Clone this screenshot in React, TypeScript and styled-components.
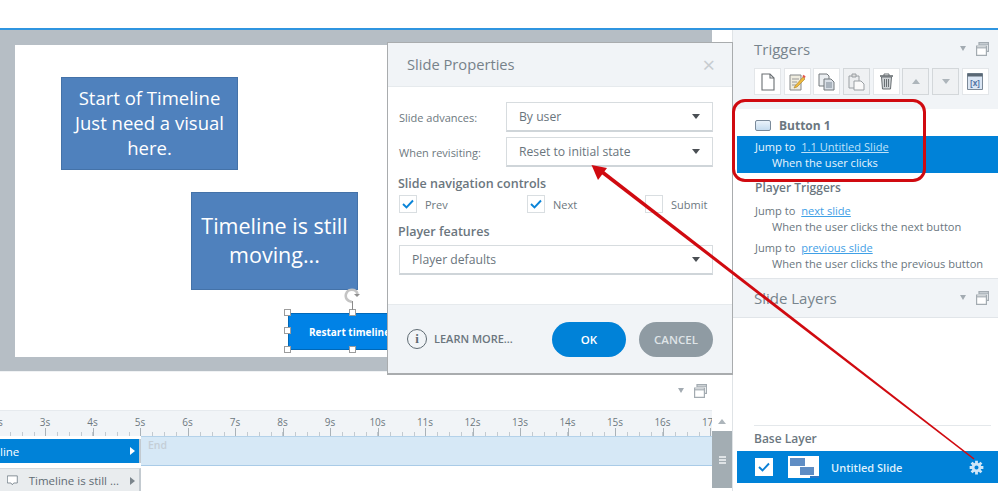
import React from 'react'
import styled, { createGlobalStyle } from 'styled-components'

const GlobalStyle = createGlobalStyle`
  html, body {
    margin: 0;
    padding: 0;
    background: #fff;
  }
  * { box-sizing: border-box; }
  body {
    font-family: "Open Sans", "Liberation Sans", sans-serif;
    color: #5f6b73;
  }
`

const seconds = [2, 3, 4, 5, 6, 7, 8, 9, 10, 11, 12, 13, 14, 15, 16, 17]

const PanelIcon = () => (
  <svg width='13' height='14' viewBox='0 0 13 14' fill='none' stroke='#a3abb1' strokeWidth='1.2'>
    <path d='M3 3V.6h9.400v8.800H10.500' />
    <path d='M3 2.200h9.400' />
    <path d='M.6 4h9.800v9.400H.6z' fill='#fff' />
    <path d='M.6 5.800h9.800' />
  </svg>
)

const Caret = () => <CaretShape />

const CheckMark = ({ color = '#0a84d8' }: { color?: string }) => (
  <svg width='12' height='10' viewBox='0 0 12 10' fill='none' stroke={color} strokeWidth='1.9'>
    <path d='M1 5l3.500 3.500L11 1.500' />
  </svg>
)

const ToolIcon = ({ name }: { name: string }) => {
  switch (name) {
    case 'new':
      return (
        <svg width='14' height='18' viewBox='0 0 14 18' fill='#fff' stroke='#6a6f73' strokeWidth='1.1'>
          <path d='M1 1h8l4 4v12H1z' />
          <path d='M9 1v4h4' fill='none' />
        </svg>
      )
    case 'edit':
      return (
        <svg width='17' height='18' viewBox='0 0 17 18' fill='none'>
          <path d='M1 2h11v15H1z' fill='#efecdf' stroke='#85888a' />
          <path d='M3 6h7M3 9h5M3 12h4' stroke='#999' />
          <path d='M6 13l8-9 2 2-8 8-3 1z' fill='#eeb93c' stroke='#a8802a' strokeWidth='.6' />
          <path d='M14 2.500l2 2' stroke='#e2564c' strokeWidth='2' />
        </svg>
      )
    case 'copy':
      return (
        <svg width='17' height='18' viewBox='0 0 17 18' fill='none' stroke='#73787c'>
          <path d='M1 1h8l2 2v10H1z' fill='#eceff2' />
          <path d='M6 6h7l3 3v8H6z' fill='#d9dfe6' />
          <path d='M8 10h6M8 12h6M8 14h6' stroke='#7b8794' />
        </svg>
      )
    case 'paste':
      return (
        <svg width='17' height='18' viewBox='0 0 17 18' fill='none' stroke='#9a9fa3'>
          <path d='M1 3h10v12H1z' fill='#eceef0' />
          <path d='M4 1h4v3H4z' fill='#ddd' />
          <path d='M6 8h7l3 3v6H6z' fill='#fafafa' />
        </svg>
      )
    case 'trash':
      return (
        <svg width='15' height='17' viewBox='0 0 15 17' fill='none' stroke='#6a7074'>
          <path d='M1 3h13' strokeWidth='1.6' />
          <path d='M5 3V1h5v2' />
          <path d='M2.500 4l1 12h8l1-12z' fill='#cfd3d6' />
          <path d='M5.500 6v8M7.500 6v8M9.500 6v8' />
        </svg>
      )
    case 'up':
      return <UpCaret />
    case 'down':
      return <DownCaret />
    default:
      return (
        <svg width='16' height='17' viewBox='0 0 16 17' fill='none'>
          <path d='M.5.500h15v16H.5z' fill='#dbe6f4' stroke='#7b8998' />
          <path d='M.5.500h15v3H.5z' fill='#5a6875' />
          <text x='8' y='12.500' fontSize='8' fontWeight='700' fill='#5577a8' textAnchor='middle' fontFamily='Open Sans'>
            [x]
          </text>
        </svg>
      )
  }
}

const tools = ['new', 'edit', 'copy', 'paste', 'trash', 'up', 'down', 'var']

const Handles = () => (
  <>
    <Handle $x={-4} $y={-4} />
    <Handle $x={61} $y={-4} />
    <Handle $x={-4} $y={14} />
    <Handle $x={-4} $y={33} />
    <Handle $x={61} $y={33} />
  </>
)

const App = (): JSX.Element => (
  <>
    <GlobalStyle />
    <Page>
      <TopBar />
      <Main>
        <LeftColumn>
          <Stage>
            <Slide>
              <TextBox $left={46} $top={32} $width={177} $height={93} $size={18.500} $line={25}>
                Start of Timeline
                <br />
                Just need a visual
                <br />
                here.
              </TextBox>
              <TextBox $left={176} $top={147} $width={167} $height={98} $size={21.500} $line={29}>
                Timeline is still
                <br />
                moving...
              </TextBox>
              <SelectedButton>
                <span>Restart timeline</span>
              </SelectedButton>
              <HandleLayer>
                <Handles />
                <RotateStem />
                <RotateIcon width='18' height='16' viewBox='0 0 18 16' fill='none'>
                  <path d='M9 14c-5-1-7-4-6-8 1-3 4-5 8-4 2 .5 3 2 3.500 4' stroke='#c4c4c4' strokeWidth='2.600' />
                  <path d='M11 6h6l-3 3z' fill='#8f8f8f' />
                </RotateIcon>
              </HandleLayer>
            </Slide>
          </Stage>
          <StageFooter>
            <Caret />
            <PanelIcon />
          </StageFooter>
          <Timeline>
            <Ruler>
              <RulerScale>
                {seconds.map((s) => (
                  <RulerCell key={s}>
                    <RulerLabel>{s}s</RulerLabel>
                    <Ticks />
                  </RulerCell>
                ))}
              </RulerScale>
            </Ruler>
            <TimelineRow>
              <RowName $active>
                <span>line</span>
                <RowArrow $active />
              </RowName>
              <RowTrack $active>End</RowTrack>
            </TimelineRow>
            <TimelineRow>
              <RowName>
                <svg width='15' height='15' viewBox='0 0 15 15' fill='#fff' stroke='#5d6b75' strokeWidth='1'>
                  <path d='M.5 1h14v10H9.500L7.500 13.500 5.500 11h-5z' />
                </svg>
                <RowLabel>Timeline is still ...</RowLabel>
                <RowArrow />
              </RowName>
              <RowTrack />
            </TimelineRow>
            <ScrollBar>
              <ScrollButton>
                <UpCaret />
              </ScrollButton>
              <ScrollThumb>
                <Grip />
              </ScrollThumb>
            </ScrollBar>
          </Timeline>
        </LeftColumn>

        <RightPanel>
          <PanelHeader $tall>
            <PanelTitleRow>
              <PanelTitle>Triggers</PanelTitle>
              <PanelActions>
                <Caret />
                <PanelIcon />
              </PanelActions>
            </PanelTitleRow>
            <Toolbar>
              {tools.map((name) => (
                <ToolButton key={name} $dim={name === 'paste' || name === 'up' || name === 'down'}>
                  <ToolIcon name={name} />
                </ToolButton>
              ))}
            </Toolbar>
          </PanelHeader>

          <TriggerList>
            <ObjectRow>
              <ObjectIcon />
              Button 1
            </ObjectRow>
            <TriggerRow $selected>
              <TriggerLine>
                Jump to <TriggerLink $selected>1.1 Untitled Slide</TriggerLink>
              </TriggerLine>
              <TriggerWhen>When the user clicks</TriggerWhen>
            </TriggerRow>
            <GroupTitle>Player Triggers</GroupTitle>
            <TriggerRow>
              <TriggerLine>
                Jump to <TriggerLink>next slide</TriggerLink>
              </TriggerLine>
              <TriggerWhen>When the user clicks the next button</TriggerWhen>
            </TriggerRow>
            <TriggerRow>
              <TriggerLine>
                Jump to <TriggerLink>previous slide</TriggerLink>
              </TriggerLine>
              <TriggerWhen>When the user clicks the previous button</TriggerWhen>
            </TriggerRow>
          </TriggerList>

          <PanelHeader>
            <PanelTitleRow>
              <PanelTitle>Slide Layers</PanelTitle>
              <PanelActions>
                <Caret />
                <PanelIcon />
              </PanelActions>
            </PanelTitleRow>
          </PanelHeader>

          <LayerArea>
            <LayerDivider />
            <BaseLabel>Base Layer</BaseLabel>
            <LayerRow>
              <LayerCheck>
                <CheckMark color='#0a7fd6' />
              </LayerCheck>
              <LayerThumb>
                <ThumbA />
                <ThumbB />
                <ThumbTag />
              </LayerThumb>
              <LayerName>Untitled Slide</LayerName>
              <svg width='15' height='15' viewBox='0 0 24 24' fill='none' stroke='#cfe6f8' strokeWidth='4.500'>
                <circle cx='12' cy='12' r='5.500' />
                <path d='M12 1v4M12 19v4M1 12h4M19 12h4M4.200 4.200l2.900 2.900M16.900 16.900l2.900 2.900M19.800 4.200l-2.900 2.900M7.100 16.900l-2.900 2.900' />
              </svg>
            </LayerRow>
          </LayerArea>
        </RightPanel>
      </Main>

      <Dialog>
        <DialogHeader>
          <DialogTitle>Slide Properties</DialogTitle>
          <CloseMark>×</CloseMark>
        </DialogHeader>
        <DialogBody>
          <FieldRow>
            <FieldLabel>Slide advances:</FieldLabel>
            <SelectBox>
              By user
              <SelectCaret />
            </SelectBox>
          </FieldRow>
          <FieldRow>
            <FieldLabel>When revisiting:</FieldLabel>
            <SelectBox>
              Reset to initial state
              <SelectCaret />
            </SelectBox>
          </FieldRow>
          <SectionTitle $top={8}>Slide navigation controls</SectionTitle>
          <CheckRow>
            <CheckItem $width={128}>
              <CheckBox>
                <CheckMark />
              </CheckBox>
              Prev
            </CheckItem>
            <CheckItem $width={118}>
              <CheckBox>
                <CheckMark />
              </CheckBox>
              Next
            </CheckItem>
            <CheckItem $width={68}>
              <CheckBox />
              Submit
            </CheckItem>
          </CheckRow>
          <SectionTitle $top={3}>Player features</SectionTitle>
          <SelectBox $full>
            Player defaults
            <SelectCaret />
          </SelectBox>
        </DialogBody>
        <DialogFooter>
          <LearnMore>
            <InfoIcon>i</InfoIcon>
            LEARN MORE...
          </LearnMore>
          <FooterButton $primary>OK</FooterButton>
          <FooterButton>CANCEL</FooterButton>
        </DialogFooter>
      </Dialog>

      <Callout />
      <AnnotationLayer width='998' height='491' viewBox='0 0 998 491'>
        <polygon points='974.500,458.400 973.500,459.600 601,173.500 603.300,170.500' fill='#d00a10' />
        <polygon points='591.500,165 607,168 598,180' fill='#d00a10' />
      </AnnotationLayer>
    </Page>
  </>
)

const Page = styled.div`
  position: relative;
  width: 998px;
  height: 491px;
  overflow: hidden;
  background: #fff;
`

const TopBar = styled.div`
  height: 30px;
  border-bottom: 2px solid #2f95e0;
`

const Main = styled.div`
  display: flex;
  height: 461px;
`

const LeftColumn = styled.div`
  width: 733px;
  display: flex;
  flex-direction: column;
  border-right: 1px solid #dfe3e6;
`

const Stage = styled.div`
  height: 341px;
  margin-right: 20px;
  padding: 15px 0 14px 15px;
  background: #b6bec5;
`

const Slide = styled.div`
  position: relative;
  width: 420px;
  height: 312px;
  background: #fff;
`

const TextBox = styled.div<{ $left: number; $top: number; $width: number; $height: number; $size: number; $line: number }>`
  position: absolute;
  left: ${(p) => p.$left}px;
  top: ${(p) => p.$top}px;
  width: ${(p) => p.$width}px;
  height: ${(p) => p.$height}px;
  padding-bottom: 2px;
  display: flex;
  align-items: center;
  justify-content: center;
  text-align: center;
  background: #4f81bd;
  border: 1px solid #4472a8;
  color: #fff;
  font-size: ${(p) => p.$size}px;
  line-height: ${(p) => p.$line}px;
`

const SelectedButton = styled.div`
  position: absolute;
  left: 273px;
  top: 268px;
  width: 110px;
  height: 37px;
  padding-left: 20px;
  display: flex;
  align-items: center;
  background: #0082e6;
  border: 1px solid #0068b8;
  color: #fff;
  font-size: 10px;
  font-weight: 700;
  white-space: nowrap;
`

const HandleLayer = styled.div`
  position: absolute;
  left: 273px;
  top: 268px;
`

const Handle = styled.div<{ $x: number; $y: number }>`
  position: absolute;
  left: ${(p) => p.$x}px;
  top: ${(p) => p.$y}px;
  width: 7px;
  height: 7px;
  background: #fff;
  border: 1.500px solid #9c9c9c;
`

const RotateStem = styled.div`
  position: absolute;
  left: 64px;
  top: -12px;
  width: 1px;
  height: 9px;
  background: #8a8a8a;
`

const RotateIcon = styled.svg`
  position: absolute;
  left: 55px;
  top: -25px;
`

const StageFooter = styled.div`
  height: 39px;
  padding: 12px 25px 0 0;
  display: flex;
  justify-content: flex-end;
  gap: 10px;
  border-top: 1px solid #f0f2f4;
`

const CaretShape = styled.div`
  width: 0;
  height: 0;
  margin-top: 4px;
  border-left: 3.500px solid transparent;
  border-right: 3.500px solid transparent;
  border-top: 5px solid #a3abb2;
`

const Timeline = styled.div`
  position: relative;
  flex: 1;
  overflow: hidden;
`

const Ruler = styled.div`
  height: 26px;
  margin-right: 20px;
  background: #f1f4f7;
  border-top: 1px solid #e6eaee;
  overflow: hidden;
`

const RulerScale = styled.div`
  display: flex;
  margin-left: -2.500px;
`

const RulerCell = styled.div`
  position: relative;
  flex: 0 0 47.500px;
  height: 25px;
`

const RulerLabel = styled.span`
  position: absolute;
  left: 0;
  top: 4px;
  transform: translateX(-50%);
  font-size: 10px;
  line-height: 14px;
  color: #6d7880;
  white-space: nowrap;
`

const Ticks = styled.div`
  position: absolute;
  left: 0;
  right: 0;
  bottom: 0;
  height: 8px;
  background:
    linear-gradient(#aab2b8, #aab2b8) 0 0 / 1px 8px no-repeat,
    repeating-linear-gradient(90deg, #c3cad0 0 1px, transparent 1px 11.875px) 0 4px / 100% 4px no-repeat;
`

const TimelineRow = styled.div`
  display: flex;
  height: 30px;
  margin-right: 20px;
  background: #fff;
`

const RowName = styled.div<{ $active?: boolean }>`
  width: 141px;
  height: 24px;
  margin-top: ${(p) => (p.$active ? '3px' : '2px')};
  padding: 0 4px 0 ${(p) => (p.$active ? '0' : '7px')};
  display: flex;
  align-items: center;
  gap: 11px;
  background: ${(p) => (p.$active ? '#0082d8' : '#e9ecee')};
  border-right: 2px solid #c3cad0;
  border-top: ${(p) => (p.$active ? '0' : '1px solid #d5dadd')};
  color: ${(p) => (p.$active ? '#fff' : '#5f6b73')};
  font-size: 11.500px;
`

const RowLabel = styled.span`
  white-space: nowrap;
`

const RowArrow = styled.i<{ $active?: boolean }>`
  margin-left: auto;
  width: 0;
  height: 0;
  border-top: 4px solid transparent;
  border-bottom: 4px solid transparent;
  border-left: 5px solid ${(p) => (p.$active ? '#fff' : '#7b858c')};
`

const RowTrack = styled.div<{ $active?: boolean }>`
  flex: 1;
  height: 30px;
  padding-left: 7px;
  background: ${(p) => (p.$active ? '#d6e8f6' : '#fff')};
  border-top: ${(p) => (p.$active ? '1px solid #b4d2ea' : '0')};
  border-bottom: ${(p) => (p.$active ? '1px solid #a9cbe7' : '0')};
  color: #c4ced6;
  font-size: 10.500px;
  font-weight: 600;
  line-height: 17px;
`

const ScrollBar = styled.div`
  position: absolute;
  top: 1px;
  right: 0;
  width: 20px;
`

const ScrollButton = styled.div`
  height: 20px;
  display: flex;
  align-items: center;
  justify-content: center;
  background: #fff;
`

const ScrollThumb = styled.div`
  height: 57px;
  display: flex;
  align-items: center;
  justify-content: center;
  background: #a3adb3;
`

const Grip = styled.div`
  width: 7px;
  height: 8px;
  background: repeating-linear-gradient(#dfe3e6 0 2px, transparent 2px 3px);
`

const UpCaret = styled.i`
  width: 0;
  height: 0;
  border-left: 4px solid transparent;
  border-right: 4px solid transparent;
  border-bottom: 5px solid #adb5bb;
`

const DownCaret = styled.i`
  width: 0;
  height: 0;
  border-left: 4px solid transparent;
  border-right: 4px solid transparent;
  border-top: 5px solid #adb5bb;
`

const RightPanel = styled.div`
  flex: 1;
  display: flex;
  flex-direction: column;
`

const PanelHeader = styled.div<{ $tall?: boolean }>`
  height: ${(p) => (p.$tall ? '79px' : '40px')};
  flex: none;
  padding: 8px 0 0 21px;
  background: #f1f4f7;
  border-top: ${(p) => (p.$tall ? '0' : '1px solid #e1e5e9')};
  border-bottom: ${(p) => (p.$tall ? '0' : '1px solid #e1e5e9')};
`

const PanelTitleRow = styled.div`
  display: flex;
  align-items: center;
  justify-content: space-between;
  padding-right: 9px;
  height: 22px;
`

const PanelTitle = styled.div`
  font-size: 15px;
  color: #77848d;
`

const PanelActions = styled.div`
  display: flex;
  align-items: flex-start;
  gap: 10px;
`

const Toolbar = styled.div`
  margin-top: 8px;
  display: flex;
  gap: 2.700px;
`

const ToolButton = styled.div<{ $dim?: boolean }>`
  width: 27px;
  height: 27px;
  display: flex;
  align-items: center;
  justify-content: center;
  background: ${(p) => (p.$dim ? '#eff1f3' : '#fff')};
  border: 1px solid ${(p) => (p.$dim ? '#d3d7da' : '#e3e6e9')};
`

const TriggerList = styled.div`
  height: 169px;
  flex: none;
  padding: 6px 0 0 4px;
`

const ObjectRow = styled.div`
  height: 21px;
  padding-left: 18px;
  display: flex;
  align-items: center;
  gap: 8px;
  font-size: 12px;
  font-weight: 700;
  color: #6b7780;
`

const ObjectIcon = styled.div`
  width: 16px;
  height: 11px;
  border: 1px solid #7a8a9a;
  border-radius: 2px;
  background: linear-gradient(#eaf3fb, #c5dbee);
`

const TriggerRow = styled.div<{ $selected?: boolean }>`
  height: 37px;
  padding: 3px 0 0 18px;
  background: ${(p) => (p.$selected ? '#0082d8' : 'transparent')};
  color: ${(p) => (p.$selected ? '#eaf5fd' : '#6a767e')};
  font-size: 11.100px;
  line-height: 15.500px;
`

const TriggerLine = styled.div``

const TriggerWhen = styled.div`
  padding-left: 17px;
  white-space: nowrap;
`

const TriggerLink = styled.span<{ $selected?: boolean }>`
  margin-left: 3px;
  color: ${(p) => (p.$selected ? '#bfe1f8' : '#3fa0e6')};
  text-decoration: underline;
`

const GroupTitle = styled.div`
  height: 27px;
  padding: 7px 0 0 18px;
  font-size: 12px;
  font-weight: 600;
  line-height: 16px;
  color: #6b7780;
`

const LayerArea = styled.div`
  flex: 1;
  padding: 107px 0 0 4px;
`

const LayerDivider = styled.div`
  height: 1px;
  margin: 0 7px 0 17px;
  background: #e4e8eb;
`

const BaseLabel = styled.div`
  height: 25px;
  padding: 5px 0 0 17px;
  font-size: 12px;
  font-weight: 600;
  line-height: 16px;
  color: #6b7780;
`

const LayerRow = styled.div`
  height: 32px;
  padding: 0 14px 0 18px;
  display: flex;
  align-items: center;
  background: #0082d8;
`

const LayerCheck = styled.div`
  width: 18px;
  height: 18px;
  display: flex;
  align-items: center;
  justify-content: center;
  background: #fff;
`

const LayerThumb = styled.div`
  position: relative;
  width: 31px;
  height: 22px;
  margin-left: 15px;
  background: #fff;
`

const ThumbA = styled.div`
  position: absolute;
  left: 2px;
  top: 2px;
  width: 15px;
  height: 8px;
  background: #5f8dc4;
`

const ThumbB = styled.div`
  position: absolute;
  left: 12px;
  top: 11px;
  width: 14px;
  height: 8px;
  background: #5f8dc4;
`

const ThumbTag = styled.div`
  position: absolute;
  right: 0;
  bottom: 0;
  width: 9px;
  height: 2px;
  background: #2f78c4;
`

const LayerName = styled.div`
  flex: 1;
  margin-left: 12px;
  color: #dff0fb;
  font-size: 11px;
  font-weight: 600;
`

const Dialog = styled.div`
  position: absolute;
  left: 387px;
  top: 42px;
  width: 346px;
  height: 333px;
  display: flex;
  flex-direction: column;
  background: #fff;
  border: 1px solid #a9acae;
  border-bottom-width: 2px;
`

const DialogHeader = styled.div`
  height: 44px;
  padding: 0 12px 2px 19px;
  display: flex;
  align-items: center;
  justify-content: space-between;
  background: #f1f4f7;
  border-bottom: 1px solid #e6eaed;
`

const DialogTitle = styled.div`
  font-size: 14.700px;
  color: #77828a;
`

const CloseMark = styled.div`
  margin-right: 5px;
  font-size: 22px;
  line-height: 22px;
  color: #c7ccd0;
`

const DialogBody = styled.div`
  flex: 1;
  padding: 15px 19px 0 11px;
`

const FieldRow = styled.div`
  height: 30px;
  margin-bottom: 5px;
  display: flex;
  align-items: center;
  justify-content: space-between;
`

const FieldLabel = styled.div`
  font-size: 11px;
  color: #6d7880;
`

const SelectBox = styled.div<{ $full?: boolean }>`
  position: relative;
  width: ${(p) => (p.$full ? '100%' : '207px')};
  height: 30px;
  margin-top: ${(p) => (p.$full ? '4px' : '0')};
  padding-left: 12px;
  display: flex;
  align-items: center;
  background: #fff;
  border: 1px solid #d7dcdf;
  border-bottom: 2px solid #cfd5d9;
  font-size: 12.200px;
  color: #6a757d;
`

const SelectCaret = styled.i`
  position: absolute;
  right: 12px;
  top: 11px;
  width: 0;
  height: 0;
  border-left: 4px solid transparent;
  border-right: 4px solid transparent;
  border-top: 5px solid #4a4f54;
`

const SectionTitle = styled.div<{ $top: number }>`
  height: 18px;
  margin: ${(p) => p.$top}px 0 0 -1px;
  font-size: 12.500px;
  font-weight: 600;
  line-height: 18px;
  color: #6b767e;
`

const CheckRow = styled.div`
  height: 26px;
  margin: -2px 0 6px;
  display: flex;
  align-items: center;
`

const CheckItem = styled.div<{ $width: number }>`
  width: ${(p) => p.$width}px;
  display: flex;
  align-items: center;
  gap: 8px;
  font-size: 11px;
  color: #6d7880;
`

const CheckBox = styled.div`
  width: 18px;
  height: 18px;
  display: flex;
  align-items: center;
  justify-content: center;
  background: #fff;
  border: 1px solid #d9dee1;
`

const DialogFooter = styled.div`
  height: 69px;
  padding: 17px 19px 0 19px;
  display: flex;
  align-items: flex-start;
  gap: 13px;
  background: #f1f4f7;
  border-top: 1px solid #e6eaed;
`

const LearnMore = styled.div`
  flex: 1;
  height: 33px;
  display: flex;
  align-items: center;
  gap: 7px;
  font-size: 11px;
  font-weight: 600;
  color: #6b767e;
`

const InfoIcon = styled.span`
  width: 20px;
  height: 20px;
  display: flex;
  align-items: center;
  justify-content: center;
  border: 1.500px solid #5f6b73;
  border-radius: 50%;
  font-family: "Liberation Serif", serif;
  font-size: 13px;
  color: #5f6b73;
`

const FooterButton = styled.div<{ $primary?: boolean }>`
  width: 74px;
  height: 35px;
  padding-bottom: 1px;
  display: flex;
  align-items: center;
  justify-content: center;
  border-radius: 18px;
  background: ${(p) => (p.$primary ? '#0082d8' : '#8f9ba3')};
  color: ${(p) => (p.$primary ? '#fff' : '#dfe4e7')};
  font-size: 11.500px;
  font-weight: 600;
`

const Callout = styled.div`
  position: absolute;
  left: 732px;
  top: 99px;
  width: 194px;
  height: 83px;
  border: 3px solid #d00a10;
  border-radius: 13px;
`

const AnnotationLayer = styled.svg`
  position: absolute;
  left: 0;
  top: 0;
  pointer-events: none;
`

export default App
